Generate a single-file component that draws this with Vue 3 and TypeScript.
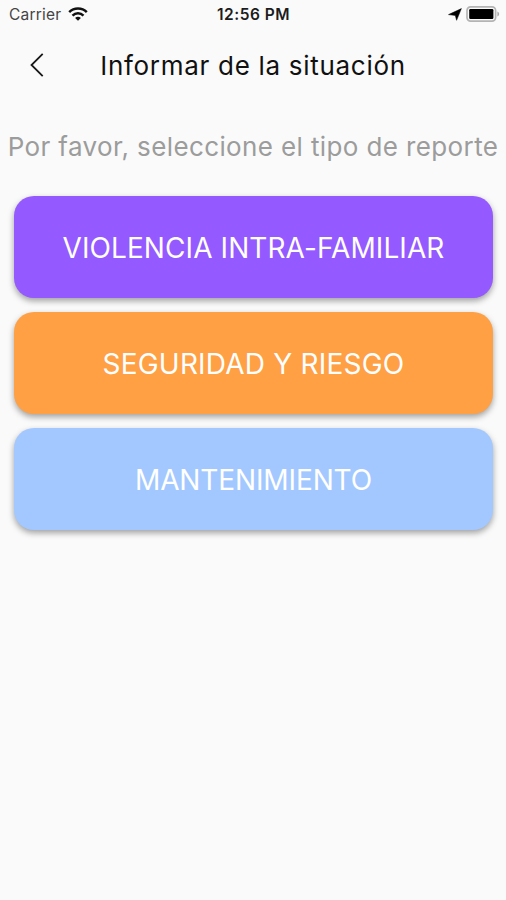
<script setup lang="ts">
interface ReportType {
  id: string
  label: string
}

const reportTypes: ReportType[] = [
  { id: 'violence', label: 'VIOLENCIA INTRA-FAMILIAR' },
  { id: 'security', label: 'SEGURIDAD Y RIESGO' },
  { id: 'maintenance', label: 'MANTENIMIENTO' },
]
</script>

<template>
  <main class="screen">
    <div class="status-bar">
      <div class="status-left">
        <span class="carrier">Carrier</span>
        <svg class="wifi" width="20" height="14" viewBox="0 0 20 14" fill="none" stroke="#111" stroke-width="2.5">
          <path d="M1.2 5.2C6 .4 14 .4 18.8 5.2" />
          <path d="M4.5 8.6C7.6 5.6 12.4 5.6 15.5 8.6" />
          <path d="M10 13.7 7.1 10.9C8.8 9.4 11.2 9.4 12.9 10.9Z" fill="#111" stroke="none" />
        </svg>
      </div>
      <span class="time">12:56 PM</span>
      <div class="status-right">
        <svg width="14" height="13" viewBox="0 0 14 13">
          <path d="M13.4.6 8.6 12.3 7.3 7.5.5 6.6Z" fill="#000" stroke="#000" stroke-width=".5" stroke-linejoin="round" />
        </svg>
        <svg width="34" height="16" viewBox="0 0 34 16">
          <rect x="1" y=".9" width="28.6" height="14.2" rx="3.6" fill="#fafafa" stroke="#b4b4b4" stroke-width="1.7" />
          <rect x="3.2" y="3.1" width="24.2" height="9.8" rx="1.2" fill="#000" />
          <path d="M31.4 5.4C33.7 6.2 33.7 9.6 31.4 10.4Z" fill="#aaa" />
        </svg>
      </div>
    </div>
    <header class="app-bar">
      <button class="back" type="button" aria-label="Atrás">
        <svg width="14" height="24" viewBox="0 0 14 24" fill="none" stroke="#181818" stroke-width="1.8">
          <path d="M12.7.8 1.5 12 12.7 23.2" />
        </svg>
      </button>
      <h1 class="title">Informar de la situación</h1>
    </header>
    <p class="prompt">Por favor, seleccione el tipo de reporte</p>
    <div class="options">
      <button v-for="type in reportTypes" :key="type.id" type="button" class="option" :class="type.id">
        <span>{{ type.label }}</span>
      </button>
    </div>
  </main>
</template>

<style>
body {
  margin: 0;
  background: #fafafa;
}
</style>

<style scoped>
.screen {
  box-sizing: border-box;
  width: 506px;
  height: 900px;
  overflow: hidden;
  background: #fafafa;
  font-family: Inter, "Liberation Sans", sans-serif;
}
.status-bar {
  display: grid;
  grid-template-columns: 1fr auto 1fr;
  align-items: center;
  height: 28px;
  padding: 0 6px 0 9px;
}
.status-left,
.status-right {
  display: flex;
  align-items: center;
}
.status-left {
  gap: 7px;
}
.status-right {
  justify-content: flex-end;
  gap: 4px;
}
.carrier {
  font-size: 15.5px;
  letter-spacing: 0.2px;
  color: #444;
}
.time {
  margin-right: 2px;
  font-size: 15.5px;
  font-weight: 600;
  letter-spacing: 0.5px;
  color: #1c1c1c;
}
.app-bar {
  display: grid;
  grid-template-columns: 73px 1fr 73px;
  align-items: center;
  height: 74px;
}
.back {
  display: flex;
  justify-content: center;
  padding: 0;
  border: 0;
  background: none;
}
.title {
  margin: 0;
  padding-top: 2px;
  text-align: center;
  white-space: nowrap;
  font-size: 26px;
  font-weight: 400;
  line-height: 32px;
  letter-spacing: 0.7px;
  color: #111;
}
.prompt {
  margin: 28px 0 0;
  text-align: center;
  white-space: nowrap;
  font-size: 26px;
  line-height: 34px;
  letter-spacing: 0.38px;
  color: #9c9c9c;
}
.options {
  display: flex;
  flex-direction: column;
  gap: 14px;
  padding: 32px 13px 0 14px;
}
.option {
  height: 102px;
  padding: 2px 0 0;
  border: 0;
  border-radius: 20px;
  box-shadow: 0 3px 6px rgba(0, 0, 0, 0.36);
  font-family: inherit;
  font-size: 28px;
  color: #fff;
}
.violence {
  background: #9459ff;
  letter-spacing: 0.08px;
}
.security {
  background: #ffa044;
  letter-spacing: 0.2px;
}
.maintenance {
  background: #a3c8ff;
  letter-spacing: -0.12px;
}
</style>
